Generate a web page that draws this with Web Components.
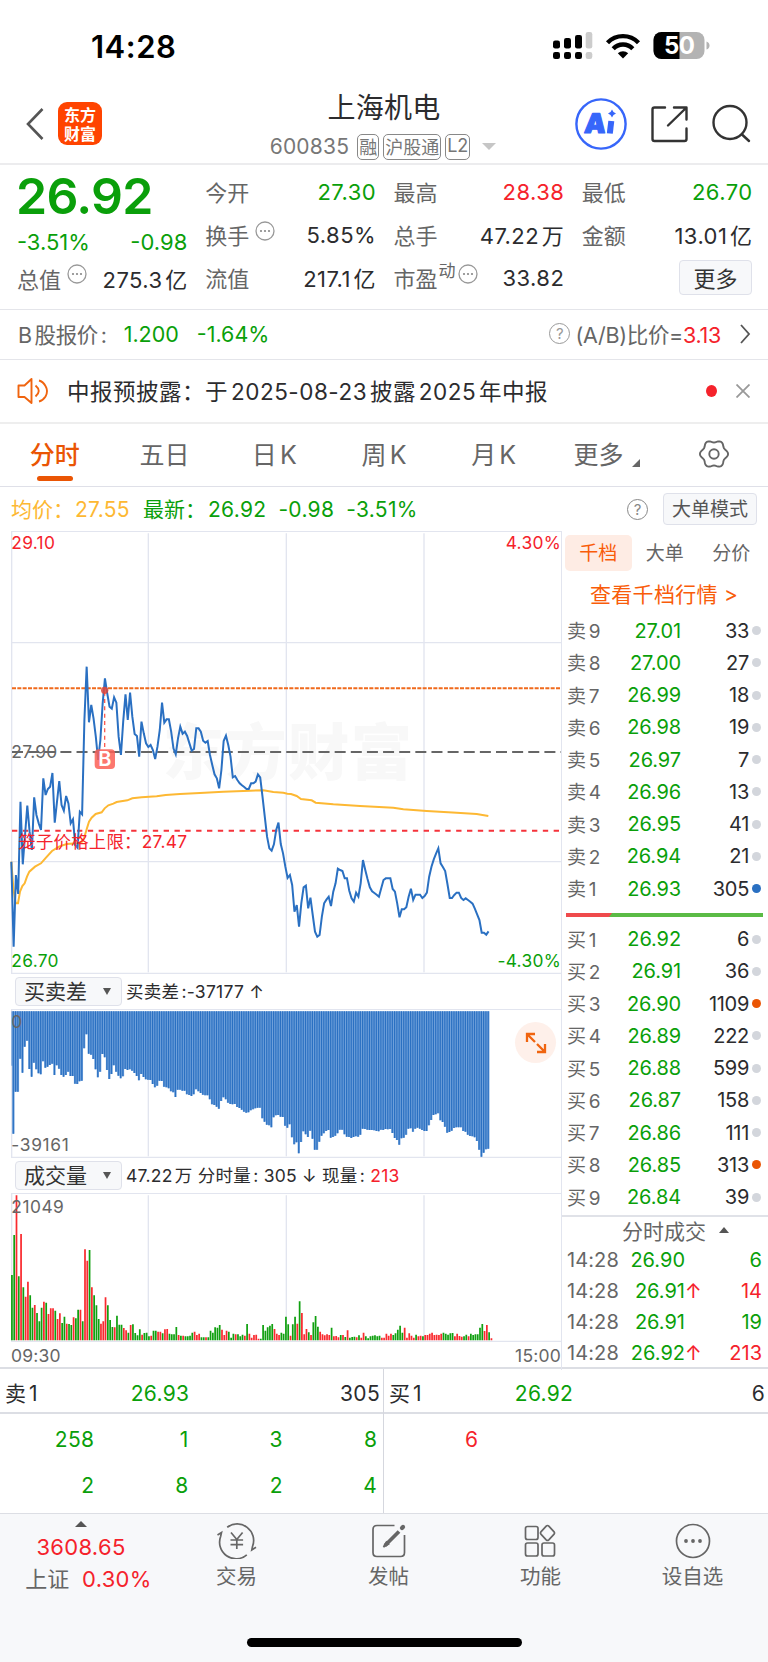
<!DOCTYPE html>
<html lang="zh-CN">
<head>
<meta charset="utf-8">
<title>上海机电 600835</title>
<style>
:root {
	--red: #f5222b;
	--green: #0a9f0a;
	--orange: #ea5504;
	--dark: #2c2c2e;
	--gray: #666;
	--line: #e4e5ea;
}

body {
	margin: 0;
	width: 768px;
	background: #fff;
	color: var(--dark);
	font-family: Inter, "Noto Sans CJK SC", sans-serif;
	font-size: 21px;
	letter-spacing: .015em;
	text-autospace: normal;
	white-space: nowrap;
}
</style>
</head>
<body>
<stock-page></stock-page>

<script>
const BASE = `
* { box-sizing: border-box; }
:host { display: block; }
svg { display: block; }
.red { color: var(--red); }
.green { color: var(--green); }
`;

class BaseElement extends HTMLElement {
	static css = "";

	connectedCallback() {
		if (this.shadowRoot) { return; }
		this.attachShadow({mode:"open"});
		this.shadowRoot.innerHTML = `<style>${BASE}${this.constructor.css}</style>${this.render()}`;
	}

	render() { return "<slot></slot>"; }
}

class StatusBar extends BaseElement {
	static css = `
:host { display: flex; justify-content: space-between; height: 86px; padding: 6px 58px 0 91px; align-items: center; color: #000; }
.time { font-size: 31px; font-weight: 600; letter-spacing: .5px; }
`;

	render() {
		return `
<span class="time">14:28</span>
<svg width="157" height="28" viewBox="0 0 157 28">
	<g>
		<rect x="0" y="8.5" width="7" height="8" rx="2.2"/><rect x="11" y="6" width="7" height="10.5" rx="2.2"/><rect x="22" y="3" width="7" height="13.5" rx="2.2"/>
		<rect x="0" y="20" width="7" height="7" rx="2.2"/><rect x="11" y="20" width="7" height="7" rx="2.2"/><rect x="22" y="20" width="7" height="7" rx="2.2"/>
		<g fill="#ccc"><rect x="32.7" y="0" width="6.6" height="16.5" rx="2.2"/><rect x="32.7" y="20" width="6.6" height="7" rx="2.2"/></g>
	</g>
	<g fill="none" stroke="#000" stroke-width="4.3">
		<path d="M54.500 10.800a21.500 21.500 0 0 1 31 0"/>
		<path d="M60.200 16.800a13.300 13.300 0 0 1 19.600 0"/>
	</g>
	<path d="M64.800 21.300a7.500 7.500 0 0 1 10.400 0L70 26.500z"/>
	<clipPath id="cell"><rect x="100.500" y="0" width="51" height="27" rx="8"/></clipPath>
	<g clip-path="url(#cell)"><rect x="100" width="52" height="28" fill="#b3b3b3"/><rect x="100" width="26.500" height="28"/></g>
	<path d="M153.500 9.500q3 1 3 4t-3 4z" fill="#b3b3b3"/>
	<text x="126.300" y="22" font-size="24" font-weight="700" letter-spacing="-.5" text-anchor="middle" fill="#fff">50</text>
</svg>`;
	}
}

class TagChip extends BaseElement {
	static css = `
:host {
	display: inline-flex; align-items: center; height: 26px; padding: 0 1px 2px;
	border: 1.500px solid #888; border-radius: 5px;
	color: #777; font-size: 18px; letter-spacing: 0;
}
`;
}

class StockHeader extends BaseElement {
	static css = `
:host { display: grid; grid-template-columns: 200px 1fr 200px; height: 79px; border-bottom: 2px solid #ececee; align-items: center; }
.left { display: flex; align-items: center; padding: 0 0 2px 25px; gap: 12px; }
.logo {
	display: grid; place-content: center; width: 44px; height: 43px; border-radius: 9px; margin-left: 1px;
	background: #ff4400; color: #fff; font: 700 16px/19px "Noto Sans CJK SC", sans-serif; letter-spacing: 0;
}
.mid { text-align: center; padding-top: 1px; }
h1 { margin: 0; font-size: 28px; font-weight: 400; line-height: 39px; letter-spacing: .3px; }
.sub { display: flex; justify-content: center; align-items: center; gap: 4px; height: 33px; padding-top: 4px; color: #777; font-size: 21px; margin: 0 -10px 0 -12px; }
.sub > span { margin-right: 4px; letter-spacing: .2px; }
.arrow { margin-left: 8px; border: 7px solid transparent; border-top: 7px solid #c6c6c6; border-bottom: 0; }
.right { display: flex; justify-content: flex-end; align-items: center; padding: 0 16px 2px 0; }
`;

	render() {
		return `
<div class="left">
	<svg width="20" height="34" viewBox="0 0 20 34" fill="none" stroke="#555" stroke-width="2.600"><path d="M17.500 2 3 17l14.500 15"/></svg>
	<div class="logo"><span>东方</span><span>财富</span></div>
</div>
<div class="mid">
	<h1>上海机电</h1>
	<div class="sub"><span>600835</span><tag-chip>融</tag-chip><tag-chip>沪股通</tag-chip><tag-chip>L2</tag-chip><i class="arrow"></i></div>
</div>
<div class="right">
	<svg width="178" height="54" viewBox="574 97 178 54" fill="none" stroke="#333" stroke-width="2.400" stroke-linecap="round" stroke-linejoin="round">
		<circle cx="601" cy="124" r="24.600" stroke="#3766fa"/>
		<text x="585" y="133.500" font-size="27" font-weight="900" letter-spacing="0" fill="#3766fa" stroke="#3766fa" stroke-width="1.200" transform="skewX(-5) translate(10.500 0)">A</text>
		<path d="M611.300 121l-1.500 12.500" stroke="#3766fa" stroke-width="6" stroke-linecap="butt"/>
		<path d="M612 109.500q1 3 4 4-3 1-4 4-1-3-4-4 3-1 4-4z" fill="#3766fa" stroke="none"/>
		<path d="M665 107.500h-10.500q-2 0-2 2v29.500q0 2 2 2h30q2 0 2-2v-10.500M674 107.500h12.500v12M686 108l-18 17.500"/>
		<circle cx="730" cy="122.500" r="16.500"/><path d="M742 134.500l7 6.500"/>
	</svg>
</div>`;
	}
}

const DOTS = `<svg class="dots" width="20" height="20" viewBox="0 0 20 20" fill="#888"><circle cx="10" cy="10" r="9" fill="none" stroke="#999" stroke-width="1.300"/><circle cx="6" cy="10" r="1.100"/><circle cx="10" cy="10" r="1.100"/><circle cx="14" cy="10" r="1.100"/></svg>`;

class StatItem extends BaseElement {
	static css = `
:host { display: flex; align-items: center; justify-content: space-between; height: 43px; font-size: 22px; letter-spacing: .02em; }
.label { display: flex; align-items: center; padding-bottom: 3px; color: var(--gray); letter-spacing: 0; }
.value { padding-bottom: 1px; margin-right: -.5px; }
.value.mixed { padding-bottom: 3px; }
sup { font-size: 17px; line-height: 17px; vertical-align: baseline; margin: -12px 0 0 1px; }
.dots { margin: -7px 0 0 6px; }
sup + .dots { margin-left: 2px; }
`;

	render() {
		let sup = this.getAttribute("sup");
		let mixed = /[万亿]/.test(this.textContent) ? "mixed" : "";
		return `
<span class="label">${this.getAttribute("label")}${sup ? `<sup>${sup}</sup>` : ""}${this.hasAttribute("info") ? DOTS : ""}</span>
<span class="value ${mixed} ${this.getAttribute("tone") || ""}"><slot></slot></span>`;
	}
}

class QuoteBoard extends BaseElement {
	static css = `
:host { display: grid; grid-template-columns: repeat(4, 1fr); column-gap: 18px; height: 145px; padding: 6px 16px 0 17px; border-bottom: 1.500px solid var(--line); }
.price { height: 51px; line-height: 51px; font-size: 50px; font-weight: 600; letter-spacing: -.7px; margin-left: -1px; }
.change { display: flex; justify-content: space-between; height: 39px; line-height: 41px; font-size: 22px; letter-spacing: 0; }
stat-item.cap { height: 36px; }
button {
	width: 73px; height: 35px; margin: 3px 0 0 auto; padding: 0 0 3px; display: block; box-sizing: border-box;
	border: 1.500px solid #dfe1ea; border-radius: 4px; background: #f7f8fa;
	font: inherit; font-size: 22px; letter-spacing: 0; color: #333;
}
`;

	render() {
		return `
<div class="green">
	<div class="price">26.92</div>
	<div class="change"><span>-3.51%</span><span>-0.98</span></div>
	<stat-item class="cap" label="总值" info style="color:#2c2c2e">275.3亿</stat-item>
</div>
<div>
	<stat-item label="今开" tone="green">27.30</stat-item>
	<stat-item label="换手" info>5.85%</stat-item>
	<stat-item label="流值">217.1亿</stat-item>
</div>
<div>
	<stat-item label="最高" tone="red">28.38</stat-item>
	<stat-item label="总手">47.22万</stat-item>
	<stat-item label="市盈" sup="动" info>33.82</stat-item>
</div>
<div>
	<stat-item label="最低" tone="green">26.70</stat-item>
	<stat-item label="金额">13.01亿</stat-item>
	<button>更多</button>
</div>`;
	}
}

class HelpMark extends BaseElement {
	static css = `
:host { display: grid; place-content: center; width: 21px; height: 21px; border: 1.300px solid #999; border-radius: 50%; color: #999; font-size: 15px; letter-spacing: 0; }
`;
	render() { return "?"; }
}

class BShareRow extends BaseElement {
	static css = `
:host { display: flex; align-items: center; height: 50px; padding: 0 17px 2px 18px; border-bottom: 1.500px solid var(--line); color: var(--gray); font-size: 21.500px; letter-spacing: 0; }
.label { letter-spacing: -.3px; }
.now { margin-left: 17px; }
.pct { margin-left: 18px; }
help-mark { margin: 0 5px 0 auto; }
svg { margin-left: 18px; }
`;

	render() {
		return `
<span class="label">B股报价:</span><span class="now green">1.200</span><span class="pct green">-1.64%</span>
<help-mark></help-mark><span class="label">(A/B)比价=<span class="red">3.13</span></span>
<svg width="12" height="20" viewBox="0 0 12 20" fill="none" stroke="#555" stroke-width="1.800"><path d="M2 1l8 9-8 9"/></svg>`;
	}
}

class NoticeRow extends BaseElement {
	static css = `
:host { display: flex; align-items: center; height: 64px; padding: 0 18px 0 17px; border-bottom: 2.500px solid #eee; font-size: 22.500px; }
.text { margin-left: 18px; padding-bottom: 3px; letter-spacing: .52px; }
.dot { width: 11px; height: 12px; border-radius: 50%; background: var(--red); margin: 0 19px 0 auto; }
`;

	render() {
		return `
<svg width="32" height="26" viewBox="0 0 32 26" fill="none" stroke="#f0640f" stroke-width="1.900" stroke-linejoin="round">
	<path d="M14.500 1v24l-7-6H1.500V7.500h6z"/><path d="M18.500 7.500q6.500 5.500 0 11M22 2.500q4 1 6.500 5.500 3 5 0 10.500-2.500 4-6.500 5"/>
</svg>
<span class="text"><slot></slot></span>
<i class="dot"></i>
<svg width="14" height="14" viewBox="0 0 14 14" stroke="#999" stroke-width="1.800"><path d="M.5.5l13 13M13.500.5l-13 13"/></svg>`;
	}
}

function gearPath(cx, cy) {
	let points = [];
	for (let a=0; a<360; a+=6) {
		let rad = a * Math.PI / 180;
		let r = 12.8 + 1.3 * Math.cos(6 * rad);
		points.push(`${(cx + r*Math.cos(rad)).toFixed(2)} ${(cy + r*Math.sin(rad)).toFixed(2)}`);
	}
	return `M${points.join("L")}z`;
}

class PeriodTabs extends BaseElement {
	static css = `
:host { display: grid; grid-template-columns: repeat(7, 1fr); height: 63px; border-bottom: 1.500px solid #dfe0e8; padding-bottom: 1px; color: var(--gray); font-size: 25px; letter-spacing: 0; }
div { display: grid; place-content: center; grid-auto-flow: column; padding-bottom: 4px; }
.active { position: relative; color: var(--orange); font-weight: 500; }
.active::after { content: ""; position: absolute; left: 37px; bottom: 4px; width: 36px; height: 5.500px; border-radius: 3px; background: var(--orange); }
.more { gap: 9px; padding-left: 7px; }
.more i { align-self: end; margin-bottom: 4px; border: 4.200px solid; border-color: transparent #666 #666 transparent; }
.set { padding: 0 0 1px 2px; }
`;

	render() {
		return `
<div class="active">分时</div><div>五日</div><div>日K</div><div>周K</div><div>月K</div>
<div class="more">更多<i></i></div>
<div class="set"><svg width="30" height="30" viewBox="0 0 30 30" fill="none" stroke="#666" stroke-width="1.900"><path d="${gearPath(15, 15)}"/><circle cx="15" cy="15" r="4.700"/></svg></div>`;
	}
}

class ChartInfo extends BaseElement {
	static css = `
:host { display: flex; align-items: center; height: 44px; padding: 0 11px; font-size: 21px; }
.avg, .last { padding-bottom: 2px; }
.avg { color: #fdb833; margin-right: 13px; }
.avg b { margin-right: 1px; }
.last b { margin-right: 2px; }
.last span { margin-left: 12px; }
b { font-weight: 400; letter-spacing: 0; }
help-mark { margin-left: auto; margin-right: 15px; border-color: #888; color: #888; }
button {
	width: 94px; height: 32px; padding: 0 0 3px; border: 1.500px solid #dfe1ea; border-radius: 4px; background: #f7f8fa;
	font: inherit; font-size: 19px; letter-spacing: 0; color: #555;
}
`;

	render() {
		return `
<span class="avg"><b>均价：</b>27.55</span>
<span class="last green"><b>最新：</b>26.92<span>-0.98</span><span>-3.51%</span></span>
<help-mark></help-mark>
<button>大单模式</button>`;
	}
}

// plot units: three to a pixel, y grows downwards, one minute is STEP wide
const LEFT = 34;
const RIGHT = 1686;
const STEP = 6.85;
const COLUMNS = [445, 859, 1272];

const PRICE = [
	1025,1280,1065,1122,845,1033,945,857,935,990,832,885,910,930,775,825,807,800,759,908,
	845,783,855,872,828,850,910,898,975,983,875,883,600,440,607,555,595,650,720,660,
	550,475,520,560,566,532,548,650,705,605,523,600,518,590,642,648,710,605,640,670,
	681,675,690,717,680,630,548,608,598,598,635,685,703,655,620,641,635,648,670,692,
	687,625,625,635,662,668,663,705,735,763,775,805,750,663,647,675,710,772,768,780,
	790,796,801,807,807,790,790,785,763,772,830,890,950,985,992,973,930,908,972,1000,
	1040,1074,1065,1095,1175,1155,1220,1150,1102,1097,1165,1133,1185,1235,1250,1245,1190,1150,1139,1130,
	1158,1115,1090,1046,1050,1053,1075,1075,1112,1135,1145,1118,1130,1090,1020,1050,1077,1102,1114,1119,
	1124,1130,1105,1080,1075,1075,1075,1107,1115,1150,1192,1168,1168,1162,1130,1106,1140,1124,1124,1124,
	1134,1128,1118,1070,1040,1018,1001,985,1030,1041,1053,1092,1134,1134,1125,1118,1118,1134,1140,1135,
	1140,1145,1151,1166,1183,1200,1238,1238,1244,1234
];

const AVERAGE = "34,1025 40,1105 47,1150 54,1150 60,1115 67,1098 74,1090 81,1070 88,1055 105,1040 123,1030 136,1015 156,993 177,980 200,972 232,970 246,965 252,955 260,928 267,905 275,893 287,882 305,877 314,865 325,856 340,851 350,846 382,841 397,835 425,832 470,829 497,825 540,822 600,819 670,815 750,812 790,811 820,816 850,818 862,821 873,822 890,828 903,837 935,841 947,848 1000,853 1080,858 1180,863 1210,868 1280,873 1370,878 1430,882 1465,888";

const DIFF = [
	300,504,378,378,279,321,243,225,310,333,291,311,323,326,287,306,303,298,294,328,
	299,309,328,333,328,318,331,331,354,355,347,345,248,206,264,267,280,311,335,318,
	265,275,313,340,325,299,318,330,338,332,310,313,311,315,322,331,344,325,334,341,
	342,343,355,365,360,345,346,363,365,368,377,380,394,372,372,375,375,386,388,391,
	386,371,377,382,387,389,389,401,416,418,423,429,406,395,401,411,415,416,415,424,
	427,432,438,441,440,434,431,428,426,426,458,468,477,479,485,455,449,448,453,454,
	480,486,476,515,536,530,563,529,497,506,514,495,519,552,552,528,510,503,496,493,
	516,514,510,503,492,492,506,513,514,517,514,512,513,507,489,490,492,493,493,494,
	496,497,492,493,490,491,490,502,517,523,537,518,516,507,489,488,498,489,486,489,
	493,496,496,479,463,448,446,443,464,469,483,501,499,495,487,485,485,485,496,498,
	507,511,512,515,526,552,573,561,551,549
];

const VOLUME = `
928g 808g 689r 932g 805r 965g 993r 948r 989g 1026g 1018r 1042g 1067g 1026g 1008r 1011g 1045r 1028r 1028r 1035g
1060r 1043r 1072g 1053g 1074r 1075g 1078g 1055r 1058g 1032g 1032r 1067g 851r 885r 853g 965r 989g 1019g 1060g 1074r
1067r 995r 1019g 1063g 1084g 1085r 1050g 1077g 1077g 1087r 1094r 1101g 1078r 1076g 1102g 1109g 1091g 1107r 1102g 1101g
1112g 1110r 1095g 1095g 1098r 1098r 1103g 1091r 1090r 1104g 1106g 1106g 1084g 1108r 1110g 1110r 1112g 1112g 1110g 1101g
1098r 1108r 1104r 1115g 1115g 1115r 1115g 1095g 1101g 1085g 1086g 1078g 1092r 1108r 1095r 1098g 1116g 1104g 1106r 1106g
1112g 1107g 1110r 1075g 1104r 1116r 1108r 1107r 1119r 1119g 1078g 1095g 1085g 1080g 1075g 1090r 1104r 1108r 1101g 1104g
1053g 1076g 1110r 1076g 1053g 1074r 1007g 1042r 1106r 1090r 1100g 1108r 1070g 1051g 1083g 1098r 1106r 1109r 1106r 1108r
1086g 1112r 1111r 1115r 1108g 1108r 1114g 1094r 1116g 1114g 1113g 1115r 1109g 1116r 1101r 1112g 1118g 1112g 1110g 1109g
1112g 1110g 1116r 1116r 1104r 1110r 1104r 1108g 1103g 1092g 1080g 1101g 1086r 1116r 1103r 1110r 1116r 1107g 1112r 1110r
1112g 1108r 1108r 1104r 1101r 1108r 1107r 1108r 1104r 1101g 1104g 1107g 1103g 1102g 1112r 1104r 1111r 1113r 1112g 1107g
1112r 1104g 1108g 1106g 1106g 1086g 1075g 1096r 1078r 1100g 1118r`.trim().split(/\s+/);

const PLOT = `
svg { font-size: 52px; letter-spacing: .900px; }
.grid { stroke: #e2e5ef; stroke-width: 4; fill: none; }
.label { fill: #666; }
`;

function grid(top, bottom, edges) {
	let verticals = COLUMNS.map(x => `M${x} ${top+7}V${bottom-5}`).join("");
	return `<path class="grid" d="M${LEFT+1} ${top}V${bottom}${verticals}${edges}"/>`;
}

class PriceChart extends BaseElement {
	static css = `${PLOT}
.mark { font: 900 184px "Noto Sans CJK SC", sans-serif; fill: #f8f8f8; letter-spacing: 4px; }
.red { fill: var(--red); }
.green { fill: var(--green); }
`;

	render() {
		let line = PRICE.map((y, i) => `${(LEFT + i*STEP).toFixed(1)},${y}`).join(" ");
		return `
<svg width="562" height="443" viewBox="0 33 1686 1329">
	<text class="mark" x="488" y="764">东方财富</text>
	${grid(33, 1362, `M${LEFT} 34H${RIGHT}M${LEFT} 368H${RIGHT}M${LEFT} 1025H${RIGHT}M${LEFT} 1360H${RIGHT}`)}
	<g fill="none" stroke-width="6">
		<path d="M36 505H${RIGHT}" stroke="#f06a1c" stroke-dasharray="12 4"/>
		<path d="M36 696H${RIGHT}" stroke="#666" stroke-dasharray="33 15.400"/>
		<path d="M36 932H${RIGHT}" stroke="#f5333b" stroke-dasharray="16 16.500"/>
		<polyline points="${AVERAGE}" stroke="#fdb833"/>
		<polyline points="${line}" stroke="#2a70c2"/>
		<path d="M314 515V690" stroke="#fb5b50" stroke-width="4" stroke-dasharray="12 10"/>
	</g>
	<circle cx="314" cy="511" r="11" fill="#e0463c" opacity=".85"/>
	<rect x="284" y="688" width="61" height="59" rx="12" fill="#fc5f55" opacity=".85"/>
	<text x="315" y="739" font-size="60" font-weight="600" text-anchor="middle" fill="#fff">B</text>
	<text class="red" x="34" y="87">29.10</text>
	<text class="red" x="1683" y="87" text-anchor="end">4.30%</text>
	<text class="label" x="34" y="713">27.90</text>
	<text class="red" x="55" y="984">笼子价格上限：27.47</text>
	<text class="green" x="34" y="1341">26.70</text>
	<text class="green" x="1683" y="1341" text-anchor="end">-4.30%</text>
</svg>`;
	}
}

class DiffChart extends BaseElement {
	static css = `
${PLOT}
:host { position: relative; }
.zoom { position: absolute; right: 5px; top: 13px; width: 41px; height: 41px; border-radius: 50%; background: #fef0ea; display: grid; place-content: center; }
`;

	render() {
		let steps = DIFF.map((y, i) => `V${y}H${(LEFT + (i+.4)*STEP).toFixed(1)}`).join("");
		let bars = DIFF.map((y, i) => `M${(LEFT - 1 + i*STEP).toFixed(1)} 137V${y}`).slice(1).join("");
		return `
<svg width="562" height="149" viewBox="0 130 1686 447">
	${grid(130, 577, `M${LEFT} 131H${RIGHT}M${LEFT} 575H${RIGHT}`)}
	<path d="M${LEFT} 137${steps}V137z" fill="#6fa0da"/>
	<path d="${bars}" stroke="#2a70c2" stroke-width="3.600"/>
	<text class="label" x="34" y="188">0</text>
	<text class="label" x="34" y="555" letter-spacing="2">-39161</text>
</svg>
<div class="zoom"><svg width="22" height="22" viewBox="0 0 22 22" fill="none" stroke="#f0640f" stroke-width="2.300"><path d="M10 2H2v8M2 2l8 8M20 12v8h-8M20 20l-8-8"/></svg></div>`;
	}
}

class VolumeChart extends BaseElement {
	static css = PLOT;

	render() {
		let bars = {r:"", g:""};
		VOLUME.forEach((item, i) => {
			bars[item.slice(-1)] += `M${(LEFT + 1.8 + i*STEP).toFixed(1)} 1124V${parseInt(item)}`;
		});
		return `
<svg width="562" height="149" viewBox="0 682 1686 447">
	${grid(682, 1129, `M${LEFT} 683H${RIGHT}M${LEFT} 1127H${RIGHT}`)}
	<g stroke-width="5.200"><path d="${bars.g}" stroke="#10a010"/><path d="${bars.r}" stroke="#f92a2f"/></g>
	<text class="label" x="34" y="741" letter-spacing="1.500">21049</text>
</svg>`;
	}
}

class IndicatorBar extends BaseElement {
	static css = `
:host { display: flex; align-items: center; height: 35px; padding-left: 15px; font-size: 17.500px; letter-spacing: .25px; }
.select {
	display: flex; align-items: center; justify-content: space-between; width: 107px; height: 29px; margin-right: 4px; padding: 0 10px 3px 8px;
	border: 1.500px solid #dfe1ea; border-radius: 4px; background: #f7f8fa; font-size: 21px; letter-spacing: 0; color: #333;
}
.select i { margin-top: 2px; border: 4.500px solid transparent; border-top: 7px solid #555; border-bottom: 0; }
.text { padding-bottom: 2px; }
`;

	render() {
		return `<span class="select">${this.getAttribute("name")}<i></i></span><span class="text"><slot></slot></span>`;
	}
}

class OrderRow extends BaseElement {
	static css = `
:host { display: grid; grid-template-columns: 35px 79px 68px 1fr; align-items: center; height: 32.270px; font-size: 20px; letter-spacing: -.1px; }
span { text-align: right; }
.label { text-align: left; color: var(--gray); font-size: 19px; letter-spacing: .3px; padding-bottom: 2px; }
.size { letter-spacing: -.3px; }
i { width: 9px; height: 9px; border-radius: 50%; margin-left: 3px; background: var(--dot, #d3d6dc); }
:host([mark=blue]) { --dot: #2a70c2; }
:host([mark=orange]) { --dot: #ea5504; }
`;

	render() {
		let [label, price, size] = this.getAttribute("data").split(",");
		return `<span class="label">${label}</span><span class="green">${price}</span><span class="size">${size}</span><i></i>`;
	}
}

class TradeRow extends BaseElement {
	static css = `
:host { display: grid; grid-template-columns: 54px 64px 18px 1fr; align-items: center; height: 30.850px; padding: 0 6px 1px 0; font-size: 20px; letter-spacing: 0; }
.time { color: var(--gray); letter-spacing: .1px; }
.num { text-align: right; }
`;

	render() {
		let [price, size] = this.getAttribute("data").split(",");
		let up = this.hasAttribute("up");
		return `<span class="time">14:28</span><span class="num green">${price}</span><span class="red">${up ? "↑" : ""}</span><span class="num ${up ? "red" : "green"}">${size}</span>`;
	}
}

const SELL = ["27.01,33", "27.00,27", "26.99,18", "26.98,19", "26.97,7", "26.96,13", "26.95,41", "26.94,21", "26.93,305"];
const BUY = ["26.92,6", "26.91,36", "26.90,1109", "26.89,222", "26.88,599", "26.87,158", "26.86,111", "26.85,313", "26.84,39"];
const MARKS = {"305":"blue", "1109":"orange", "313":"orange"};

function orderRow(label, data) {
	let mark = MARKS[data.split(",")[1]];
	return `<order-row data="${label},${data}"${mark ? ` mark="${mark}"` : ""}></order-row>`;
}

class OrderPanel extends BaseElement {
	static css = `
:host { border-left: 1px solid #e2e5ef; padding-top: 4px; }
nav { display: grid; grid-template-columns: repeat(3, 66.500px); padding-left: 3px; height: 36px; font-size: 19px; letter-spacing: 0; color: var(--gray); }
nav span { display: grid; place-content: center; border-radius: 5px; padding-bottom: 3px; }
nav .on { background: #feece4; color: #f95c09; }
.link { height: 43.500px; padding: 2px 0 0 28px; line-height: 43px; font-size: 21px; letter-spacing: .3px; color: #f95c09; }
.rows { padding-left: 5px; }
.ratio { height: 4px; margin: 8px 5px 6px 4px; background: #5bbb45; }
.ratio i { display: block; height: 4px; width: 46px; background: #ef4a4c; clip-path: polygon(0 0, 100% 0, calc(100% - 3px) 100%, 0 100%); }
.title { display: flex; align-items: center; gap: 13px; height: 30px; margin-top: 2px; padding: 0 0 3px 60px; border-top: 2px solid #e0e2e8; color: var(--gray); letter-spacing: 0; }
.title i { border: 5px solid transparent; border-bottom: 6px solid #555; border-top: 0; }
`;

	render() {
		return `
<nav><span class="on">千档</span><span>大单</span><span>分价</span></nav>
<div class="link">查看千档行情 &gt;</div>
<div class="rows">${SELL.map((data, i) => orderRow(`卖${9-i}`, data)).join("")}</div>
<div class="ratio"><i></i></div>
<div class="rows">${BUY.map((data, i) => orderRow(`买${i+1}`, data)).join("")}</div>
<div class="title">分时成交<i></i></div>
<div class="rows">
	<trade-row data="26.90,6"></trade-row>
	<trade-row data="26.91,14" up></trade-row>
	<trade-row data="26.91,19"></trade-row>
	<trade-row data="26.92,213" up></trade-row>
</div>`;
	}
}

class QueueTable extends BaseElement {
	static css = `
:host { border-right: 1.500px solid #d5d7de; height: 144px; }
:host(:last-of-type) { border-right: 0; }
.head { display: grid; grid-template-columns: 75px 160px 1fr; align-items: center; height: 45px; padding: 5px 3px 0 5px; border-bottom: 2px solid #dcdee4; }
.head :first-child { padding-bottom: 2px; }
.head :last-child { text-align: right; }
.cells { display: grid; grid-template-columns: repeat(4, 94.300px); grid-auto-rows: 46px; padding-top: 2px; align-items: center; text-align: right; }
.price { text-align: center; }
`;

	render() {
		let [label, price, size] = this.getAttribute("data").split(",");
		let cells = this.getAttribute("queue").split(",").map(n => `<span>${n}</span>`).join("");
		return `
<div class="head"><span>${label}</span><span class="price green">${price}</span><span>${size}</span></div>
<div class="cells ${this.getAttribute("tone")}">${cells}</div>`;
	}
}

const ICONS = {
	trade: `<path d="M10.200 4.300A16.500 16.500 0 0 1 35.500 23.500l-.7 3.500 4.200-2.700M29.800 31.800A16.500 16.500 0 0 1 3.700 13.300L4.500 9.500.5 12"/><path d="M14 9.500l5.800 7 5.800-7M19.800 16.500V26M13.500 17h12.600M13.500 21.700h12.600"/>`,
	post: `<path d="M25.500 2.500H8q-4 0-4 4v23q0 4 4 4h23.500q4 0 4-4V12"/><path d="M30 8.500 16 22.500" stroke-width="3.800"/><path d="M17.500 19l-3 5 5-3z" fill="#666"/><path d="M33 5l1-1" stroke-width="4.200" stroke-linecap="round"/>`,
	more: `<rect x="4.500" y="3.500" width="12.500" height="13" rx="2"/><path d="M26.500 2.500q.7 0 1.300.6l5.300 5.800q1 1.100 0 2.200l-5.300 5.700q-1.300 1.200-2.600 0l-5.300-5.700q-1-1.100 0-2.200l5.300-5.800q.6-.6 1.300-.6z"/><rect x="4.500" y="20" width="12.500" height="13" rx="2"/><rect x="21" y="20" width="12.500" height="13" rx="2"/>`,
	select: `<circle cx="20" cy="18" r="16.500"/><g fill="#666" stroke="none"><circle cx="13" cy="18" r="1.900"/><circle cx="20" cy="18" r="1.900"/><circle cx="27" cy="18" r="1.900"/></g>`
};

class NavItem extends BaseElement {
	static css = `
:host { display: flex; flex-direction: column; align-items: center; gap: 2px; padding: 9px 0 0 1px; color: var(--gray); font-size: 20.500px; line-height: 32px; letter-spacing: 0; }
`;

	render() {
		return `<svg width="40" height="36" viewBox="0 0 40 36" fill="none" stroke="#666" stroke-width="1.700">${ICONS[this.getAttribute("icon")]}</svg><slot></slot>`;
	}
}

class BottomNav extends BaseElement {
	static css = `
:host { display: block; height: 149px; background: #f7f8fa; border-top: 1.500px solid #dcdee4; }
nav { display: grid; grid-template-columns: 160px repeat(4, 1fr); height: 124px; }
.index { display: flex; flex-direction: column; align-items: center; padding: 7px 0 0 2px; font-size: 22px; line-height: 31.500px; }
.index i { border: 6.500px solid transparent; border-bottom: 6.500px solid #555; border-top: 0; margin-bottom: 5px; }
.index .change { padding-left: 15px; }
.index .change span { color: var(--gray); margin-right: 10px; letter-spacing: 0; }
.home { width: 275px; height: 9px; border-radius: 5px; background: #000; margin: 0 auto; }
`;

	render() {
		return `
<nav>
	<div class="index red"><i></i><span>3608.65</span><span class="change"><span>上证</span>0.30%</span></div>
	<nav-item icon="trade">交易</nav-item>
	<nav-item icon="post">发帖</nav-item>
	<nav-item icon="more">功能</nav-item>
	<nav-item icon="select">设自选</nav-item>
</nav>
<div class="home"></div>`;
	}
}

class StockPage extends BaseElement {
	static css = `
main { display: grid; grid-template-columns: 561px 207px; height: 838px; border-bottom: 2px solid #dcdee4; }
.chart { min-width: 0; }
.axis { display: flex; justify-content: space-between; padding-left: 11px; font-size: 17.500px; line-height: 28px; letter-spacing: .2px; color: var(--gray); }
.queues { display: grid; grid-template-columns: 384px 384px; }
`;

	render() {
		return `
<status-bar></status-bar>
<stock-header></stock-header>
<quote-board></quote-board>
<b-share-row></b-share-row>
<notice-row>中报预披露：于2025-08-23披露2025年中报</notice-row>
<period-tabs></period-tabs>
<chart-info></chart-info>
<main>
	<div class="chart">
		<price-chart></price-chart>
		<indicator-bar name="买卖差">买卖差:-37177 ↑</indicator-bar>
		<diff-chart></diff-chart>
		<indicator-bar name="成交量">47.22万 分时量: 305 ↓ 现量: <span class="red" style="color:var(--red)">213</span></indicator-bar>
		<volume-chart></volume-chart>
		<div class="axis"><span>09:30</span><span>15:00</span></div>
	</div>
	<order-panel></order-panel>
</main>
<div class="queues">
	<queue-table data="卖1,26.93,305" tone="green" queue="258,1,3,8,2,8,2,4"></queue-table>
	<queue-table data="买1,26.92,6" tone="red" queue="6"></queue-table>
</div>
<bottom-nav></bottom-nav>`;
	}
}

customElements.define("status-bar", StatusBar);
customElements.define("tag-chip", TagChip);
customElements.define("stock-header", StockHeader);
customElements.define("stat-item", StatItem);
customElements.define("quote-board", QuoteBoard);
customElements.define("help-mark", HelpMark);
customElements.define("b-share-row", BShareRow);
customElements.define("notice-row", NoticeRow);
customElements.define("period-tabs", PeriodTabs);
customElements.define("chart-info", ChartInfo);
customElements.define("price-chart", PriceChart);
customElements.define("diff-chart", DiffChart);
customElements.define("volume-chart", VolumeChart);
customElements.define("indicator-bar", IndicatorBar);
customElements.define("order-row", OrderRow);
customElements.define("trade-row", TradeRow);
customElements.define("order-panel", OrderPanel);
customElements.define("queue-table", QueueTable);
customElements.define("nav-item", NavItem);
customElements.define("bottom-nav", BottomNav);
customElements.define("stock-page", StockPage);
</script>
</body>
</html>
